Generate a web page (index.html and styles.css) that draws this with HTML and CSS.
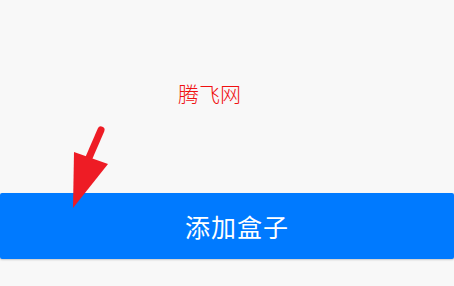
FILE: index.html
```html
<!DOCTYPE html>
<html lang="zh">
<head>
  <meta charset="UTF-8">
  <meta name="viewport" content="width=device-width, initial-scale=1.0">
  <title>腾飞网</title>
  <link rel="stylesheet" href="styles.css">
</head>
<body>
  <div class="page">
    <div class="title-area">
      <p class="site-name">腾飞网</p>
    </div>
    <button class="add-btn" type="button">添加盒子</button>
    <svg class="pointer" width="454" height="286" viewBox="0 0 454 286">
      <line x1="101" y1="130" x2="88" y2="160" stroke="#ee1c25" stroke-width="7" stroke-linecap="round"/>
      <polygon points="74,152 108,164 73,208" fill="#ee1c25"/>
    </svg>
  </div>
</body>
</html>
```

FILE: styles.css
```css
* {
  box-sizing: border-box;
}

html, body {
  margin: 0;
  padding: 0;
  background-color: #f8f8f8;
  font-family: "Noto Sans CJK SC", "Noto Sans", sans-serif;
}

.page {
  position: relative;
  width: 454px;
  height: 286px;
  display: flex;
  flex-direction: column;
}

.title-area {
  height: 193px;
  padding-top: 78px;
  padding-left: 178px;
}

.site-name {
  margin: 0;
  color: #f01010;
  font-size: 21px;
  font-weight: 300;
  line-height: 30px;
}

.add-btn {
  width: 100%;
  height: 66px;
  padding: 0 0 0 20px;
  border: none;
  border-radius: 2px;
  background-color: #007aff;
  color: #fff;
  font-family: inherit;
  font-size: 25px;
  letter-spacing: 1px;
  box-shadow: 0 1px 2px rgba(0, 0, 0, 0.2);
}

.pointer {
  position: absolute;
  left: 0;
  top: 0;
  pointer-events: none;
}
```
